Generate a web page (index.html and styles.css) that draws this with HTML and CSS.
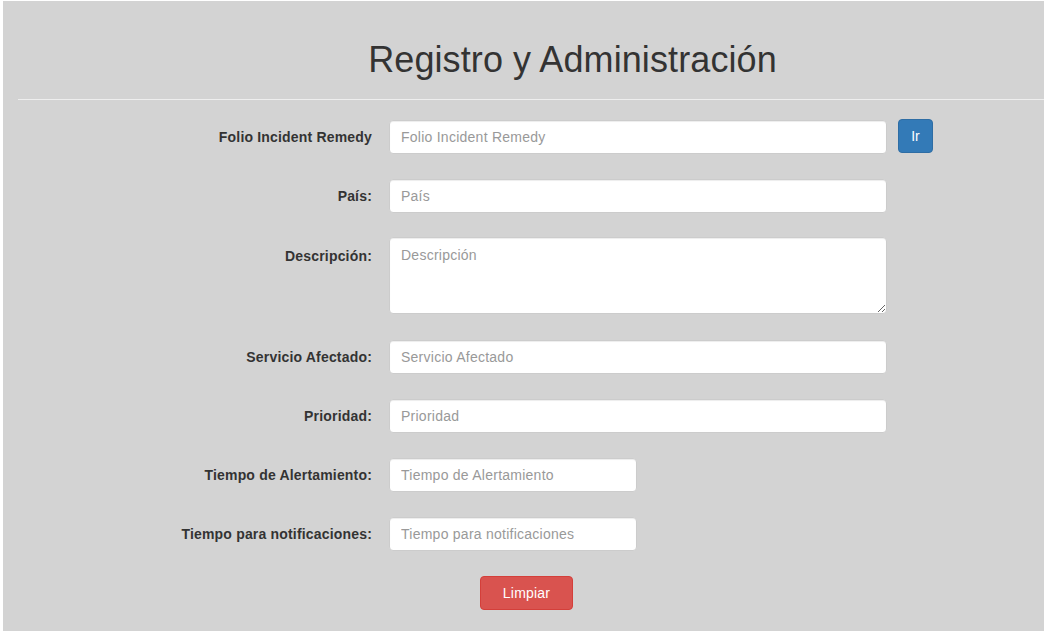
FILE: index.html
```html
<!DOCTYPE html>
<html lang="es">
<head>
<meta charset="utf-8">
<title>Registro y Administración</title>
<link rel="stylesheet" href="styles.css">
</head>
<body>
<div class="page">
  <h1 class="title">Registro y Administración</h1>
  <hr class="divider">
  <form class="form">
    <label class="label" for="folio">Folio Incident Remedy</label>
    <div class="field">
      <input class="control" id="folio" type="text" placeholder="Folio Incident Remedy">
      <button type="button" class="btn btn-primary">Ir</button>
    </div>

    <label class="label" for="pais">País:</label>
    <div class="field"><input class="control" id="pais" type="text" placeholder="País"></div>

    <label class="label label-top" for="desc">Descripción:</label>
    <div class="field"><textarea class="control area" id="desc" placeholder="Descripción"></textarea></div>

    <label class="label" for="serv">Servicio Afectado:</label>
    <div class="field"><input class="control" id="serv" type="text" placeholder="Servicio Afectado"></div>

    <label class="label" for="prio">Prioridad:</label>
    <div class="field"><input class="control" id="prio" type="text" placeholder="Prioridad"></div>

    <label class="label" for="alert">Tiempo de Alertamiento:</label>
    <div class="field"><input class="control short" id="alert" type="text" placeholder="Tiempo de Alertamiento"></div>

    <label class="label" for="notif">Tiempo para notificaciones:</label>
    <div class="field"><input class="control short" id="notif" type="text" placeholder="Tiempo para notificaciones"></div>
  </form>
  <div class="actions">
    <button type="button" class="btn btn-danger">Limpiar</button>
  </div>
</div>
</body>
</html>
```

FILE: styles.css
```css
html, body {
  margin: 0;
  padding: 0;
  background: #ffffff;
}

body {
  font-family: "Liberation Sans", Arial, Helvetica, sans-serif;
  font-size: 14px;
  color: #333333;
  overflow: hidden;
}

.page {
  margin: 1px 0 0 3px;
  min-height: 630px;
  background: #d3d3d3;
  padding-top: 39px;
  box-sizing: border-box;
}

.title {
  margin: 0;
  padding-left: 98px;
  font-size: 36px;
  font-weight: 500;
  line-height: 40px;
  letter-spacing: 0.1px;
  text-align: center;
  color: #333333;
}

.divider {
  margin: 19px 0 0 15px;
  height: 0;
  border: 0;
  border-top: 1px solid #eeeeee;
}

.form {
  display: grid;
  grid-template-columns: 369px 1fr;
  column-gap: 17px;
  row-gap: 25px;
  margin-top: 20px;
}

.label {
  display: flex;
  align-items: center;
  justify-content: flex-end;
  font-weight: bold;
  font-size: 14px;
  letter-spacing: 0.18px;
  color: #333333;
  height: 34px;
}

.label-top {
  align-self: start;
  margin-top: 1px;
}

.field {
  display: flex;
  align-items: flex-start;
  gap: 11px;
}

.control {
  display: block;
  box-sizing: border-box;
  width: 498px;
  height: 34px;
  padding: 6px 11px;
  font-family: "Liberation Sans", Arial, Helvetica, sans-serif;
  font-size: 14px;
  line-height: 20px;
  letter-spacing: 0.25px;
  color: #555555;
  background: #ffffff;
  border: 1px solid #cccccc;
  border-radius: 4px;
  box-shadow: inset 0 1px 1px rgba(0, 0, 0, 0.075);
  margin: 0;
}

.control::placeholder {
  color: #999999;
  opacity: 1;
}

.area {
  height: 77px;
  padding-top: 7px;
  resize: vertical;
  margin-top: -1px;
  margin-bottom: 1px;
}

.short {
  width: 248px;
}

.btn {
  box-sizing: border-box;
  height: 34px;
  padding: 6px 12px;
  font-family: "Liberation Sans", Arial, Helvetica, sans-serif;
  font-size: 14px;
  line-height: 20px;
  color: #ffffff;
  border: 1px solid transparent;
  border-radius: 4px;
  cursor: pointer;
}

.btn-primary {
  background: #337ab7;
  border-color: #2e6da4;
  width: 35px;
  padding: 6px 0;
  margin-top: -1px;
}

.btn-danger {
  background: #d9534f;
  border-color: #d43f3a;
  width: 93px;
  letter-spacing: 0.2px;
}

.actions {
  display: flex;
  justify-content: center;
  padding-left: 6px;
  margin-top: 25px;
}
```
